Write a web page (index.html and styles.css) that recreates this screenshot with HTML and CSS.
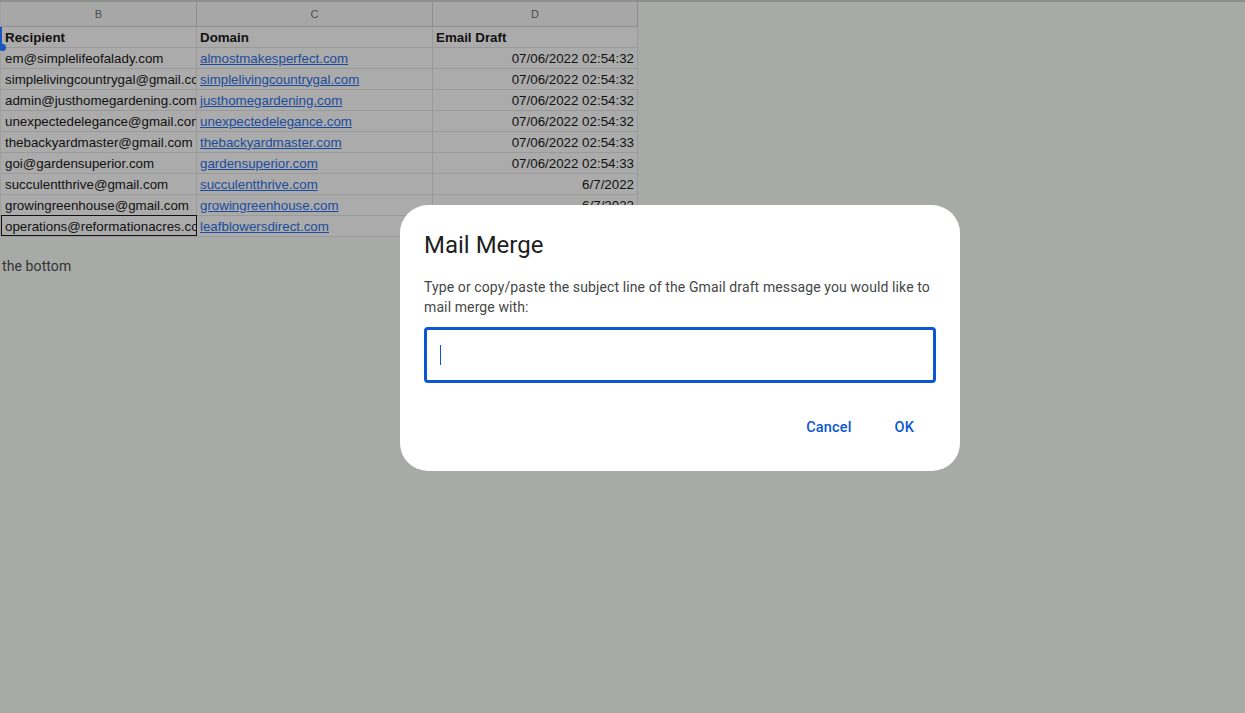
FILE: index.html
```html
<!DOCTYPE html>
<html>
<head>
<meta charset="utf-8">
<link rel="stylesheet" href="styles.css">
</head>
<body>
<div class="page">
  <div class="sheet-wrap">
    <table class="sheet">
      <colgroup><col class="col-b"><col class="col-c"><col class="col-d"></colgroup>
      <tr class="colhead"><th>B</th><th>C</th><th>D</th></tr>
      <tr class="bold"><td>Recipient</td><td>Domain</td><td>Email Draft</td></tr>
      <tr><td>em@simplelifeofalady.com</td><td><a>almostmakesperfect.com</a></td><td class="num">07/06/2022 02:54:32</td></tr>
      <tr><td>simplelivingcountrygal@gmail.com</td><td><a>simplelivingcountrygal.com</a></td><td class="num">07/06/2022 02:54:32</td></tr>
      <tr><td>admin@justhomegardening.com</td><td><a>justhomegardening.com</a></td><td class="num">07/06/2022 02:54:32</td></tr>
      <tr><td>unexpectedelegance@gmail.com</td><td><a>unexpectedelegance.com</a></td><td class="num">07/06/2022 02:54:32</td></tr>
      <tr><td>thebackyardmaster@gmail.com</td><td><a>thebackyardmaster.com</a></td><td class="num">07/06/2022 02:54:33</td></tr>
      <tr><td>goi@gardensuperior.com</td><td><a>gardensuperior.com</a></td><td class="num">07/06/2022 02:54:33</td></tr>
      <tr><td>succulentthrive@gmail.com</td><td><a>succulentthrive.com</a></td><td class="num">6/7/2022</td></tr>
      <tr><td>growingreenhouse@gmail.com</td><td><a>growingreenhouse.com</a></td><td class="num">6/7/2022</td></tr>
      <tr><td class="selected">operations@reformationacres.com</td><td><a>leafblowersdirect.com</a></td><td class="num"></td></tr>
    </table>
    <div class="row-marker"></div>
    <div class="row-dot"></div>
  </div>
  <p class="note">the bottom</p>

  <div class="dialog">
    <h1 class="title">Mail Merge</h1>
    <p class="desc">Type or copy/paste the subject line of the Gmail draft message you would like to mail merge with:</p>
    <div class="field"><span class="caret"></span></div>
    <div class="actions">
      <button class="btn">Cancel</button>
      <button class="btn btn-ok">OK</button>
    </div>
  </div>
</div>
</body>
</html>
```

FILE: styles.css
```css
html, body {
  margin: 0;
  padding: 0;
  background: #a8aaa7;
  width: 1245px;
  height: 713px;
  overflow: hidden;
}
.page {
  position: relative;
  width: 1245px;
  height: 713px;
  border-top: 2px solid #8d8f8c;
  box-sizing: border-box;
  font-family: "Liberation Sans", Arial, sans-serif;
}
.sheet-wrap {
  position: relative;
  width: 637px;
}
.sheet {
  border-collapse: collapse;
  table-layout: fixed;
  width: 637px;
  background: #ababab;
  font-size: 13.33px;
  color: #111;
}
.col-b { width: 196px; }
.col-c { width: 236px; }
.col-d { width: 205px; }
.sheet th, .sheet td {
  border: 1px solid #9a9a9a;
  padding: 1px 3px 0 3px;
  white-space: nowrap;
  overflow: hidden;
  text-overflow: clip;
  box-sizing: border-box;
}
.sheet td:first-child { padding-left: 4px; }
.sheet tr { height: 21px; }
.sheet tr.colhead { height: 24px; }
.sheet th {
  font-weight: normal;
  font-size: 11px;
  color: #4d4d4d;
  background: #a7a7a7;
  border-color: #8e8e8e;
  border-top: none;
  text-align: center;
  padding: 0 3px;
}
.sheet th:first-child, .sheet td:first-child { border-left: 1px solid #a0a0a0; }
.sheet tr.bold td { font-weight: bold; }
.sheet td a {
  color: #1b4b9e;
  text-decoration: underline;
}
.sheet td.num { text-align: right; }
.sheet td.selected {
  outline: 1px solid #111;
  outline-offset: -1px;
}
.row-marker {
  position: absolute;
  left: 0;
  top: 25px;
  width: 2px;
  height: 21px;
  background: #1a56c0;
}
.row-dot {
  position: absolute;
  left: -1px;
  top: 42px;
  width: 7px;
  height: 7px;
  border-radius: 50%;
  background: #1a56c0;
}
.note {
  margin: 21px 0 0 2px;
  font-family: Roboto, "Liberation Sans", sans-serif;
  font-size: 14px;
  letter-spacing: 0.1px;
  color: #343434;
}
.dialog {
  position: absolute;
  left: 400px;
  top: 203px;
  width: 560px;
  height: 266px;
  box-sizing: border-box;
  background: #fff;
  border-radius: 28px;
  padding: 24px 24px 0 24px;
  font-family: Roboto, "Liberation Sans", sans-serif;
}
.title {
  margin: 0;
  font-size: 24px;
  font-weight: 400;
  line-height: 32px;
  color: #1f1f1f;
}
.desc {
  margin: 16px 0 10px 0;
  font-size: 14px;
  letter-spacing: 0.11px;
  line-height: 20px;
  color: #444746;
}
.field {
  height: 56px;
  box-sizing: border-box;
  border: 3px solid #0b57d0;
  border-radius: 4px;
  padding: 15px 13px;
  display: flex;
  align-items: center;
}
.caret {
  width: 1px;
  height: 20px;
  background: #0b57d0;
}
.actions {
  display: flex;
  justify-content: flex-end;
  margin-top: 25px;
}
.btn {
  background: none;
  border: none;
  font-family: Roboto, "Liberation Sans", sans-serif;
  font-size: 14.5px;
  letter-spacing: 0.15px;
  font-weight: 500;
  color: #0b57d0;
  height: 38px;
  padding: 0 22px;
  cursor: pointer;
}
.btn-ok { padding-left: 21px; }
```
